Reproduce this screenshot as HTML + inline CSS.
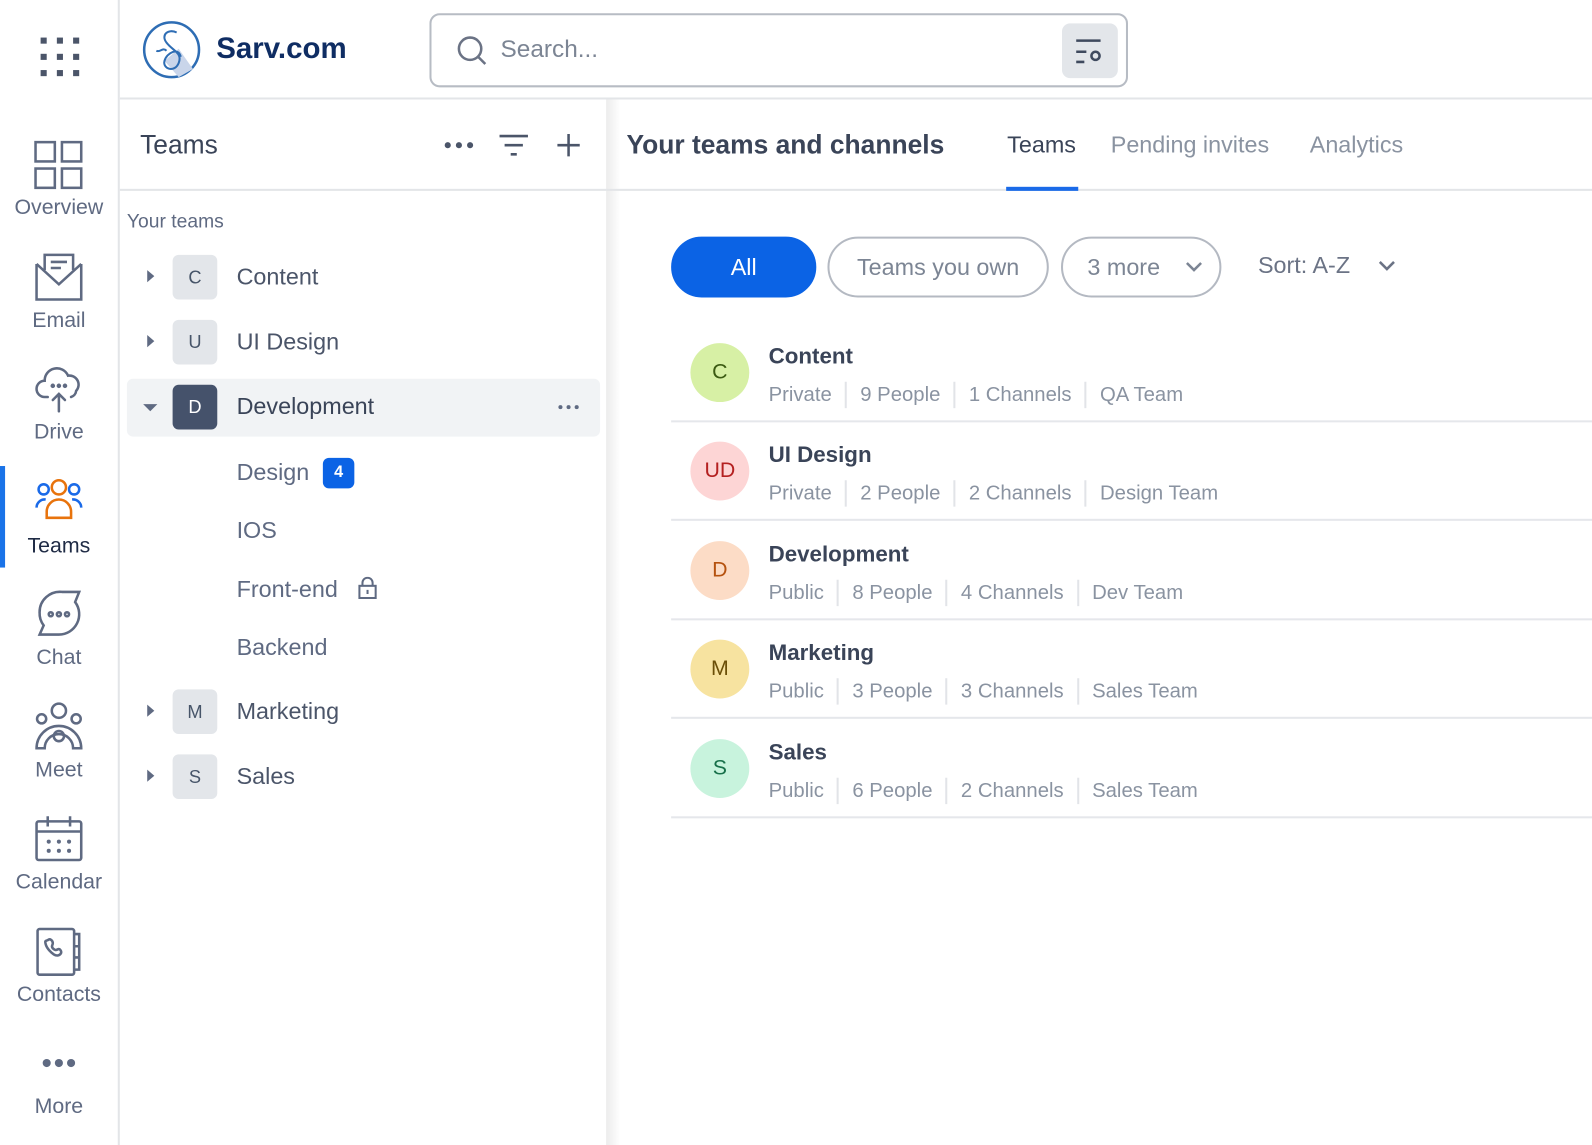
<!DOCTYPE html>
<html><head><meta charset="utf-8"><style>
*{box-sizing:border-box;margin:0;padding:0}
body{width:1592px;height:1128px;overflow:hidden;background:#fff;font-family:"Liberation Sans",Arial,sans-serif;color:#334155;position:relative}
#w{position:absolute;left:0;top:0;width:1568px;height:1111px;transform:scale(1.0153);transform-origin:0 0}
.abs{position:absolute}
.rail{left:0;top:0;width:118px;height:1128px;border-right:2px solid #e3e5e8;background:#fff}
.nav{position:absolute;left:0;width:116px;text-align:center;font-size:21px;color:#5f6a82}
.nav svg{display:block;margin:0 auto 6px}
.hdr{left:118px;top:0;width:1480px;height:98px;border-bottom:2px solid #e3e5e8}
.search{left:423px;top:13px;width:688px;height:73px;border:2px solid #b7bcc4;border-radius:10px}
.t{position:absolute;white-space:nowrap}
.row{position:absolute;left:125px;width:466px;height:57px}
.sq{position:absolute;left:45px;top:6px;width:44px;height:44px;border-radius:6px;background:#e3e6ea;color:#475569;font-size:18px;text-align:center;line-height:44px}
.rname{position:absolute;left:108px;top:14px;font-size:23px;color:#4b5569}
.caret{position:absolute;left:20px;top:21px;width:0;height:0;border-top:6px solid transparent;border-bottom:6px solid transparent;border-left:7px solid #5f6a82}
.sub{position:absolute;left:233px;font-size:23px;color:#5f6a82}
.pill{position:absolute;top:233px;height:60px;border-radius:30px;border:2px solid #b4b9c2;font-size:23px;color:#7c8594;line-height:56px;text-align:center}
.item{position:absolute;left:661px;width:931px;height:97px;border-bottom:2px solid #e5e7eb}
.av{position:absolute;left:19px;top:19px;width:58px;height:58px;border-radius:50%;text-align:center;line-height:58px;font-size:21px}
.nm{position:absolute;left:96px;top:19px;font-size:22px;font-weight:bold;color:#3a4458}
.meta{position:absolute;left:96px;top:57px;font-size:20px;color:#8a93a1;white-space:nowrap}
.meta span{display:inline-block;padding:0 13px;border-left:2px solid #e2e4e8;line-height:26px}
.meta span:first-child{padding-left:0;border-left:none}
</style></head><body><div id="w">

<div class="abs rail"></div>
<svg class="abs" style="left:38px;top:35px" width="42" height="42" viewBox="0 0 42 42" fill="#4b5569"><rect x="2" y="2" width="6" height="6"/><rect x="18" y="2" width="6" height="6"/><rect x="34" y="2" width="6" height="6"/><rect x="2" y="18" width="6" height="6"/><rect x="18" y="18" width="6" height="6"/><rect x="34" y="18" width="6" height="6"/><rect x="2" y="34" width="6" height="6"/><rect x="18" y="34" width="6" height="6"/><rect x="34" y="34" width="6" height="6"/></svg>

<div class="nav" style="top:137px"><svg width="50" height="50" viewBox="0 0 50 50" fill="none" stroke="#5f6a82" stroke-width="2.5"><rect x="2" y="3" width="19" height="19"/><rect x="28" y="3" width="19" height="19"/><rect x="2" y="29" width="19" height="19"/><rect x="28" y="29" width="19" height="19"/></svg>Overview</div>
<div class="nav" style="top:248px"><svg width="50" height="50" viewBox="0 0 50 50" fill="none" stroke="#5f6a82" stroke-width="2.5"><path d="M3 12v35h44V12"/><path d="M3 12l22 20 22-20"/><path d="M11 18V3h28v15"/><path d="M17 10h16M17 16h10"/></svg>Email</div>
<div class="nav" style="top:358px"><svg width="50" height="50" viewBox="0 0 50 50" fill="none" stroke="#5f6a82" stroke-width="2.5" stroke-linecap="round"><path d="M14 33H11a8 8 0 0 1 0-16 12 12 0 0 1 23-5 9 9 0 0 1 8 15 7 7 0 0 1-5 6"/><path d="M25 47V30M19 36l6-6 6 6"/><circle cx="19" cy="22" r="1" fill="#5f6a82"/><circle cx="25" cy="22" r="1" fill="#5f6a82"/><circle cx="31" cy="22" r="1" fill="#5f6a82"/></svg>Drive</div>
<div class="abs" style="left:0;top:459px;width:5px;height:100px;background:#1a73e8"></div>
<div class="nav" style="top:470px;color:#1e2a44"><svg width="50" height="50" viewBox="0 0 50 50" fill="none" stroke-width="2.5"><circle cx="10" cy="12" r="5" stroke="#1a6ae8"/><circle cx="40" cy="12" r="5" stroke="#1a6ae8"/><path d="M3 30a8 8 0 0 1 9-8M47 30a8 8 0 0 0-9-8" stroke="#1a6ae8"/><circle cx="25" cy="10" r="7" stroke="#e8730c"/><path d="M13 40v-6a12 12 0 0 1 24 0v6z" stroke="#e8730c"/></svg>Teams</div>
<div class="nav" style="top:580px"><svg width="50" height="50" viewBox="0 0 50 50" fill="none" stroke="#5f6a82" stroke-width="2.5"><path d="M45 3H28A20 20 0 0 0 6 23a20 20 0 0 0 4 13l-4 9h19a20 20 0 0 0 16-32z"/><circle cx="17" cy="25" r="2"/><circle cx="25" cy="25" r="2"/><circle cx="33" cy="25" r="2"/></svg>Chat</div>
<div class="nav" style="top:691px"><svg width="50" height="50" viewBox="0 0 50 50" fill="none" stroke="#5f6a82" stroke-width="2.5"><circle cx="25" cy="9" r="7"/><circle cx="8" cy="17" r="4.5"/><circle cx="42" cy="17" r="4.5"/><path d="M3 46a22 22 0 0 1 44 0h-8a14 14 0 0 0-28 0z"/><circle cx="25" cy="34" r="5"/></svg>Meet</div>
<div class="nav" style="top:801px"><svg width="50" height="50" viewBox="0 0 50 50" fill="none" stroke="#5f6a82" stroke-width="2.5"><rect x="3" y="8" width="44" height="38" rx="2"/><path d="M3 18h44M14 3v10M36 3v10"/><g fill="#5f6a82" stroke="none"><circle cx="15" cy="28" r="2"/><circle cx="25" cy="28" r="2"/><circle cx="35" cy="28" r="2"/><circle cx="15" cy="37" r="2"/><circle cx="25" cy="37" r="2"/><circle cx="35" cy="37" r="2"/></g></svg>Calendar</div>
<div class="nav" style="top:912px"><svg width="50" height="50" viewBox="0 0 50 50" fill="none" stroke="#5f6a82" stroke-width="2.5"><rect x="4" y="3" width="36" height="45" rx="2"/><path d="M40 8h5v35h-5M40 20h5M40 31h5"/><path d="M14 14c2-2 5 0 5 3 0 2-2 3 0 5s3 2 5 1 4 2 3 4-4 3-7 1-7-6-8-10 0-3 2-4z"/></svg>Contacts</div>
<div class="nav" style="top:1022px"><svg width="50" height="50" viewBox="0 0 50 50" fill="#5f6a82"><circle cx="13" cy="25" r="4"/><circle cx="25" cy="25" r="4"/><circle cx="37" cy="25" r="4"/></svg>More</div>

<div class="abs hdr"></div>
<svg class="abs" style="left:140px;top:20px" width="58" height="58" viewBox="0 0 58 58"><circle cx="29" cy="29" r="27" fill="#fff" stroke="#2e6db4" stroke-width="2.5"/><path d="M22 40l14 16 14-8-14-20z" fill="#c9d5ea"/><path d="M34 12c-8-4-16 2-10 10s16 10 12 20-16 6-14-2 14-14 16-4M14 30c4 2 6-4 10 0" fill="none" stroke="#2e6db4" stroke-width="2"/></svg>
<div class="t" style="left:213px;top:32px;font-size:29px;font-weight:bold;color:#0f2d63">Sarv.com</div>
<div class="abs search"></div>
<svg class="abs" style="left:449px;top:34px" width="32" height="32" viewBox="0 0 32 32" fill="none" stroke="#6b7385" stroke-width="2.5"><circle cx="14" cy="14" r="11"/><path d="M22 22l7 7"/></svg>
<div class="t" style="left:493px;top:35px;font-size:24px;color:#7c8594">Search...</div>
<div class="abs" style="left:1046px;top:23px;width:55px;height:54px;background:#e3e6ea;border-radius:8px"></div>
<svg class="abs" style="left:1058px;top:35px" width="32" height="30" viewBox="0 0 32 30" fill="none" stroke="#3f4a5e" stroke-width="2.5"><path d="M2 5h24M2 16h10M2 26h8"/><circle cx="21" cy="20" r="4"/></svg>

<div class="abs" style="left:118px;top:98px;width:480px;height:90px;border-bottom:2px solid #e3e5e8"></div>
<div class="t" style="left:138px;top:127px;font-size:26px;color:#3a4458">Teams</div>
<svg class="abs" style="left:436px;top:135px" width="32" height="16" fill="#4b5569"><circle cx="5" cy="8" r="3"/><circle cx="16" cy="8" r="3"/><circle cx="27" cy="8" r="3"/></svg>
<svg class="abs" style="left:490px;top:130px" width="32" height="26" fill="none" stroke="#4b5569" stroke-width="2.5"><path d="M2 4h28M7 13h18M13 22h6"/></svg>
<svg class="abs" style="left:546px;top:129px" width="28" height="28" fill="none" stroke="#4b5569" stroke-width="2.5"><path d="M14 3v22M3 14h22"/></svg>
<div class="t" style="left:125px;top:208px;font-size:19px;color:#5f6a82">Your teams</div>

<div class="row" style="top:245px"><div class="caret"></div><div class="sq">C</div><div class="rname">Content</div></div>
<div class="row" style="top:309px"><div class="caret"></div><div class="sq">U</div><div class="rname">UI Design</div></div>
<div class="row" style="top:373px;background:#f1f3f5;border-radius:6px"><div style="position:absolute;left:16px;top:25px;border-left:7px solid transparent;border-right:7px solid transparent;border-top:7px solid #5f6a82"></div><div class="sq" style="background:#45526b;color:#fff">D</div><div class="rname" style="color:#3a4458">Development</div><svg style="position:absolute;left:424px;top:23px" width="22" height="10" fill="#5f6a82"><circle cx="3" cy="5" r="2"/><circle cx="11" cy="5" r="2"/><circle cx="19" cy="5" r="2"/></svg></div>
<div class="sub" style="top:452px">Design</div>
<div class="abs" style="left:318px;top:451px;width:31px;height:30px;background:#0b63e5;border-radius:6px;color:#fff;font-size:16px;font-weight:bold;text-align:center;line-height:30px">4</div>
<div class="sub" style="top:509px">IOS</div>
<div class="sub" style="top:567px">Front-end</div>
<svg class="abs" style="left:352px;top:568px" width="20" height="22" fill="none" stroke="#5f6a82" stroke-width="2"><rect x="2" y="9" width="16" height="12"/><path d="M5 9V6a5 5 0 0 1 10 0v3M10 13v4"/></svg>
<div class="sub" style="top:624px">Backend</div>
<div class="row" style="top:673px"><div class="caret"></div><div class="sq">M</div><div class="rname">Marketing</div></div>
<div class="row" style="top:737px"><div class="caret"></div><div class="sq">S</div><div class="rname">Sales</div></div>

<div class="abs" style="left:597px;top:98px;width:14px;height:1030px;background:linear-gradient(90deg,#ececec,#fff)"></div>
<div class="abs" style="left:597px;top:98px;width:995px;height:90px;border-bottom:2px solid #e3e5e8"></div>
<div class="t" style="left:617px;top:127px;font-size:26px;font-weight:bold;color:#3a4458">Your teams and channels</div>
<div class="t" style="left:992px;top:129px;font-size:23px;color:#3a4458">Teams</div>
<div class="abs" style="left:991px;top:184px;width:71px;height:4px;background:#1a6ae8"></div>
<div class="t" style="left:1094px;top:129px;font-size:23px;color:#8a93a1">Pending invites</div>
<div class="t" style="left:1290px;top:129px;font-size:23px;color:#8a93a1">Analytics</div>

<div class="pill" style="left:661px;width:143px;background:#0b63e5;border-color:#0b63e5;color:#fff">All</div>
<div class="pill" style="left:815px;width:218px">Teams you own</div>
<div class="pill" style="left:1045px;width:158px;text-align:left;padding-left:24px">3 more<svg style="position:absolute;left:120px;top:22px" width="18" height="12" fill="none" stroke="#7c8594" stroke-width="2.5"><path d="M2 2l7 7 7-7"/></svg></div>
<div class="t" style="left:1239px;top:248px;font-size:23px;color:#6b7385">Sort: A-Z</div>
<svg class="abs" style="left:1357px;top:256px" width="18" height="12" fill="none" stroke="#6b7385" stroke-width="2.5"><path d="M2 2l7 7 7-7"/></svg>

<div class="item" style="top:319px"><div class="av" style="background:#d7f0a5;color:#3b5a12">C</div><div class="nm">Content</div><div class="meta"><span>Private</span><span>9 People</span><span>1 Channels</span><span>QA Team</span></div></div>
<div class="item" style="top:416px"><div class="av" style="background:#fdd5d5;color:#b42020">UD</div><div class="nm">UI Design</div><div class="meta"><span>Private</span><span>2 People</span><span>2 Channels</span><span>Design Team</span></div></div>
<div class="item" style="top:514px"><div class="av" style="background:#fcdcc6;color:#b5520f">D</div><div class="nm">Development</div><div class="meta"><span>Public</span><span>8 People</span><span>4 Channels</span><span>Dev Team</span></div></div>
<div class="item" style="top:611px"><div class="av" style="background:#f7e3a0;color:#6b4f07">M</div><div class="nm">Marketing</div><div class="meta"><span>Public</span><span>3 People</span><span>3 Channels</span><span>Sales Team</span></div></div>
<div class="item" style="top:709px"><div class="av" style="background:#c8f3dd;color:#18704a">S</div><div class="nm">Sales</div><div class="meta"><span>Public</span><span>6 People</span><span>2 Channels</span><span>Sales Team</span></div></div>

</div></body></html>
